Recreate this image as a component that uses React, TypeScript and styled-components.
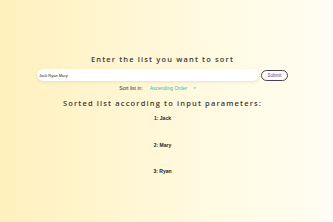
import { useState } from 'react';
import styled, { createGlobalStyle } from 'styled-components';

const GlobalStyle = createGlobalStyle`
  html, body {
    margin: 0;
    padding: 0;
    height: 100%;
  }
  body {
    font-family: 'Open Sans', 'DejaVu Sans', sans-serif;
  }
`;

const App = () => {
  const [text, setText] = useState('Jack Ryan Mary');
  const [order, setOrder] = useState('asc');
  const [items, setItems] = useState(['Jack', 'Mary', 'Ryan']);

  const handleSubmit = () => {
    const list = text.split(' ').filter(Boolean).sort();
    setItems(order === 'asc' ? list : list.reverse());
  };

  return (
    <Page>
      <GlobalStyle />
      <Title>Enter the list you want to sort</Title>
      <InputRow>
        <ListInput value={text} onChange={(e) => setText(e.target.value)} />
        <SubmitButton onClick={handleSubmit}>Submit</SubmitButton>
      </InputRow>
      <SortRow>
        <SortLabel>Sort list in:</SortLabel>
        <SelectWrap>
          <OrderSelect value={order} onChange={(e) => setOrder(e.target.value)}>
            <option value="asc">Ascending Order</option>
            <option value="desc">Descending Order</option>
          </OrderSelect>
          <Chevron viewBox="0 0 10 6">
            <path d="M1 1l4 4 4-4z" fill="#3cc3b8" />
          </Chevron>
        </SelectWrap>
      </SortRow>
      <Title $spaced>Sorted list according to input parameters:</Title>
      <ResultList>
        {items.map((item, i) => (
          <ResultItem key={item + i}>
            {i + 1}: {item}
          </ResultItem>
        ))}
      </ResultList>
    </Page>
  );
};

const Page = styled.div`
  min-height: 222px;
  box-sizing: border-box;
  padding: 53px 8px 0 0;
  background: linear-gradient(90deg, #fff0bd 0%, #fff8da 50%, #fffef4 100%);
  display: flex;
  flex-direction: column;
  align-items: center;
`;

const Title = styled.h2<{ $spaced?: boolean }>`
  margin: ${(p) => (p.$spaced ? '6px 0 0' : '0')};
  font-family: 'Open Sans', sans-serif;
  font-weight: 600;
  font-size: 7.5px;
  letter-spacing: 1.15px;
  color: #3a3a3a;
  line-height: 12px;
`;

const InputRow = styled.div`
  display: flex;
  align-items: center;
  gap: 2px;
  margin-top: 4px;
`;

const ListInput = styled.input`
  width: 222px;
  height: 12px;
  box-sizing: border-box;
  border: none;
  border-radius: 6px;
  background: #fff;
  box-shadow: 0 1px 3px rgba(200, 180, 120, 0.35);
  padding: 0 2px;
  font-family: 'Liberation Sans', sans-serif;
  font-size: 4px;
  color: #222;
  outline: none;
`;

const SubmitButton = styled.button`
  width: 27px;
  height: 11px;
  box-sizing: border-box;
  padding: 0;
  border: 1px solid #4a4050;
  border-radius: 6px;
  background: #fffdf5;
  color: #6b3f8e;
  font-family: 'Liberation Sans', sans-serif;
  font-size: 4.5px;
  cursor: pointer;
`;

const SortRow = styled.div`
  display: flex;
  align-items: center;
  gap: 7px;
  margin-top: 4px;
  margin-right: 8px;
`;

const SortLabel = styled.span`
  font-family: 'Liberation Sans', sans-serif;
  font-size: 5px;
  color: #333;
`;

const SelectWrap = styled.div`
  position: relative;
  display: flex;
  align-items: center;
`;

const OrderSelect = styled.select`
  appearance: none;
  border: none;
  background: transparent;
  width: 48px;
  padding: 0;
  font-family: 'Liberation Sans', sans-serif;
  font-size: 5px;
  color: #2fbfb2;
  outline: none;
`;

const Chevron = styled.svg`
  position: absolute;
  right: 1px;
  width: 3.5px;
  height: 2.2px;
  pointer-events: none;
`;

const ResultList = styled.ol`
  list-style: none;
  margin: 6px 0 0;
  padding: 0;
  display: flex;
  flex-direction: column;
  align-items: center;
  gap: 20.5px;
`;

const ResultItem = styled.li`
  font-family: 'Liberation Sans', sans-serif;
  font-weight: bold;
  font-size: 5px;
  line-height: 6px;
  color: #222;
`;

export default App;
